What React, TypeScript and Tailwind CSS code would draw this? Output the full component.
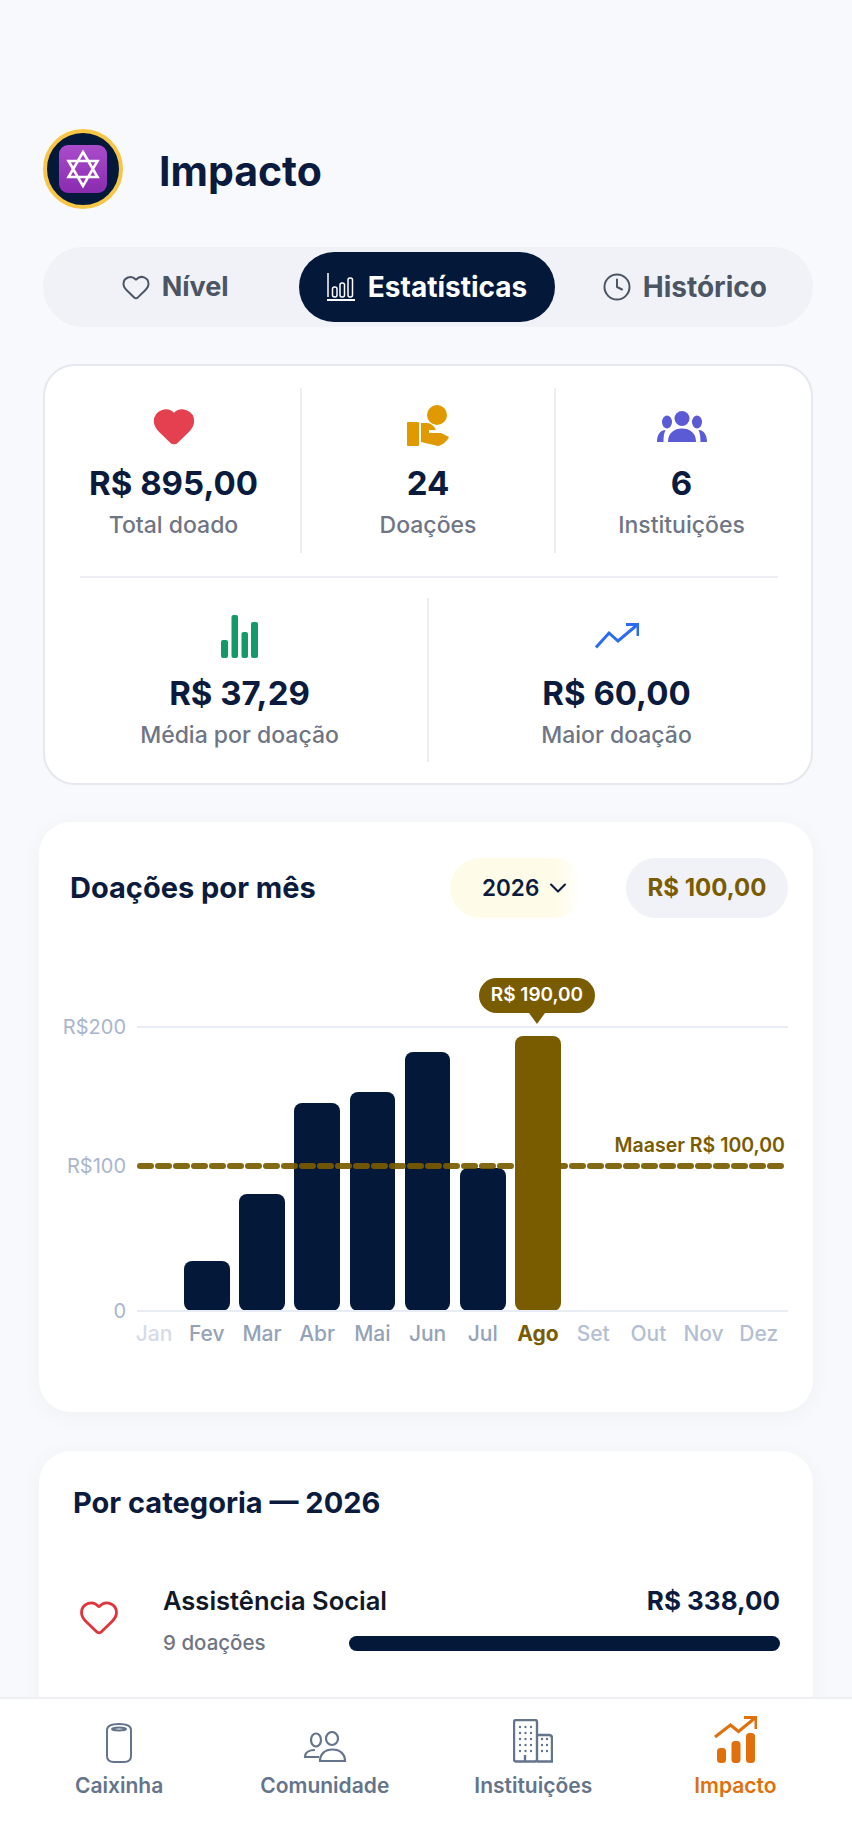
import { ChevronDown, Clock, Heart } from 'lucide-react';

const months = [
  { label: 'Jan', bar: 0, color: 'text-[#d5dbe7] pl-[5px]' },
  { label: 'Fev', bar: 50, color: 'text-[#94a3b8]' },
  { label: 'Mar', bar: 117, color: 'text-[#94a3b8]' },
  { label: 'Abr', bar: 208, color: 'text-[#94a3b8]' },
  { label: 'Mai', bar: 219, color: 'text-[#94a3b8]' },
  { label: 'Jun', bar: 259, color: 'text-[#94a3b8]' },
  { label: 'Jul', bar: 143, color: 'text-[#94a3b8]' },
  { label: 'Ago', bar: 275, color: 'text-[#7a5c00] font-bold' },
  { label: 'Set', bar: 0, color: 'text-[#b4bfd3]' },
  { label: 'Out', bar: 0, color: 'text-[#b4bfd3]' },
  { label: 'Nov', bar: 0, color: 'text-[#b4bfd3]' },
  { label: 'Dez', bar: 0, color: 'text-[#b4bfd3]' },
];

function StarAvatar() {
  return (
    <div className="flex h-[80px] w-[80px] shrink-0 items-center justify-center rounded-full border-[4px] border-[#f7c644] bg-[#04183a]">
      <svg width="48" height="48" viewBox="0 0 48 48">
        <defs>
          <linearGradient id="purple" x1="0" y1="0" x2="0" y2="1">
            <stop offset="0" stopColor="#a94ccc" />
            <stop offset="1" stopColor="#8a2bb0" />
          </linearGradient>
        </defs>
        <rect x="0" y="0" width="48" height="48" rx="9" fill="url(#purple)" />
        <path d="M24 7 L38.5 32 H9.5 Z M24 41 L9.5 16 H38.5 Z" fill="none" stroke="#fff" strokeWidth="2.6" strokeLinejoin="miter" />
      </svg>
    </div>
  );
}

function TabChartIcon() {
  return (
    <svg width="28" height="28" viewBox="0 0 28 28" fill="none" stroke="#fff" strokeWidth="1.5">
      <path d="M1 0 V24" />
      <path d="M0 27 H28" strokeWidth="2" />
      <rect x="5.5" y="14" width="4.5" height="10" rx="2" />
      <rect x="13" y="10" width="4.5" height="14" rx="2" />
      <rect x="21" y="5" width="4.5" height="19" rx="2" />
    </svg>
  );
}

function HandIcon() {
  return (
    <svg width="42" height="42" viewBox="0 0 42 42" fill="#e09a00">
      <circle cx="30" cy="10" r="10" />
      <rect x="0" y="17" width="12" height="24" rx="1" />
      <path d="M14 18 H20 C24 18 27 21 29 25 H22 V28 H34 L42 32 C40 36 36 40 31 41 L14 37 Z" />
    </svg>
  );
}

function GroupIcon() {
  return (
    <svg width="50" height="31" viewBox="0 0 50 31" fill="#5b5bd6">
      <ellipse cx="25" cy="7.5" rx="7.5" ry="7.5" />
      <ellipse cx="10" cy="11" rx="5" ry="6.5" />
      <ellipse cx="40" cy="11" rx="5" ry="6.5" />
      <path d="M11 31 C11 22 17 17.500 25 17.500 C33 17.500 39 22 39 31 Z" />
      <path d="M0 31 C0 24 3 19 8.500 19 C7 22 6.500 26 6.500 31 Z" />
      <path d="M50 31 C50 24 47 19 41.500 19 C43 22 43.500 26 43.500 31 Z" />
    </svg>
  );
}

function GreenBars() {
  return (
    <svg width="37" height="43" viewBox="0 0 37 43" fill="#129a68">
      <rect x="0" y="25" width="7" height="18" rx="2" />
      <rect x="10.500" y="0" width="6.500" height="43" rx="2" />
      <rect x="20.500" y="17" width="6.500" height="26" rx="2" />
      <rect x="30" y="7" width="7" height="36" rx="2" />
    </svg>
  );
}

function TrendIcon() {
  return (
    <svg width="44" height="26" viewBox="0 0 44 26" fill="none" stroke="#2b6cf0" strokeWidth="3">
      <path d="M1 24.500 L14 10 L23 18 L42 2" />
      <path d="M31 1.500 H43 V13" />
    </svg>
  );
}

function CaixinhaIcon() {
  return (
    <svg width="26" height="40" viewBox="0 0 26 40" fill="none" stroke="#64748b" strokeWidth="2">
      <path d="M1 7 C1 3 5 1 13 1 C21 1 25 3 25 7 V33 C25 37 22 39 18 39 H8 C4 39 1 37 1 33 Z" />
      <ellipse cx="13" cy="6" rx="7" ry="1.500" />
    </svg>
  );
}

function ComunidadeIcon() {
  return (
    <svg width="44" height="32" viewBox="0 0 44 32" fill="none" stroke="#64748b" strokeWidth="2.2">
      <ellipse cx="13" cy="9" rx="5" ry="6.500" />
      <ellipse cx="29" cy="7.500" rx="6" ry="6.500" />
      <path d="M17 30 C17 23 22 18.500 29.500 18.500 C37 18.500 42 23 42 30 Z" />
      <path d="M16 26 H2 C2 21.500 6 19 12 19" />
    </svg>
  );
}

function PredioIcon() {
  const rows = [8, 14, 20, 26, 32];
  return (
    <svg width="40" height="44" viewBox="0 0 40 44" fill="none" stroke="#64748b" strokeWidth="2.4">
      <rect x="1" y="1" width="23" height="41.500" rx="2" />
      <path d="M24 16 H36 C38 16 39 17 39 19 V42.500 H24" />
      <path d="M12 42 V36" />
      {rows.map((y) => (
        <g key={y} fill="#64748b" stroke="none">
          <circle cx="7" cy={y} r="1.200" />
          <circle cx="12.500" cy={y} r="1.200" />
          <circle cx="18" cy={y} r="1.200" />
          {y > 14 && <circle cx="29" cy={y} r="1.200" />}
          {y > 14 && <circle cx="34" cy={y} r="1.200" />}
        </g>
      ))}
    </svg>
  );
}

function ImpactoIcon() {
  return (
    <svg width="43" height="47" viewBox="0 0 43 47" fill="#e0700c">
      <rect x="3" y="32" width="9" height="15" rx="3.500" />
      <rect x="17.500" y="25" width="9" height="22" rx="3.500" />
      <rect x="32" y="17" width="9" height="30" rx="3.500" />
      <path d="M1 21 L16.500 9 L24.500 15.500 L41 2" fill="none" stroke="#e0700c" strokeWidth="3" />
      <path d="M30 1.500 H42 V13" fill="none" stroke="#e0700c" strokeWidth="3" />
    </svg>
  );
}

function Stat({ icon, value, label, className }: { icon: React.ReactNode; value: string; label: string; className?: string }) {
  return (
    <div className={`flex flex-col items-center pt-[7px] ${className ?? ''}`}>
      <div className="flex h-[62px] items-center justify-center">{icon}</div>
      <div className="mt-[6px] text-[33px] leading-[40px] font-bold text-[#0b1b3d]">{value}</div>
      <div className="mt-[7px] text-[23px] leading-[30px] font-medium text-[#6f7585]">{label}</div>
    </div>
  );
}

function NavItem({ icon, label, active, className }: { icon: React.ReactNode; label: string; active?: boolean; className?: string }) {
  return (
    <div className={`flex flex-col items-center ${className ?? ''}`}>
      <div className="flex h-[50px] items-end justify-center">{icon}</div>
      <span className={`mt-[9px] text-[21px] leading-[28px] font-semibold ${active ? 'text-[#e0700c]' : 'text-[#64748b]'}`}>
        {label}
      </span>
    </div>
  );
}

export default function App() {
  return (
    <div className="flex h-[1847px] w-[852px] flex-col overflow-hidden bg-[#f8f9fc] font-[family-name:Inter,sans-serif]">
      <main className="min-h-0 flex-1 overflow-hidden pt-[129px] pr-[39px] pl-[39px]">
        {/* Header */}
        <header className="ml-[4px] flex items-center gap-[36px]">
          <StarAvatar />
          <h1 className="pt-[3px] text-[41px] leading-[48px] font-bold text-[#0b1b3d]">Impacto</h1>
        </header>

        {/* Tabs */}
        <div className="mt-[38px] ml-[4px] grid h-[80px] grid-cols-3 rounded-[40px] bg-[#f0f2f8] p-[5px] text-[28px] font-bold text-[#4b5563]">
          <div className="flex items-center justify-center gap-[11px] text-[27px]">
            <Heart size={30} strokeWidth={1.6} />
            <span>Nível</span>
          </div>
          <div className="-ml-[2px] flex items-center justify-center gap-[13px] rounded-[35px] bg-[#04183a] text-white">
            <TabChartIcon />
            <span>Estatísticas</span>
          </div>
          <div className="flex items-center justify-center gap-[11px] pl-[6px]">
            <Clock size={30} strokeWidth={1.6} />
            <span>Histórico</span>
          </div>
        </div>

        {/* Stats */}
        <section className="mt-[37px] ml-[4px] h-[421px] rounded-[32px] border-2 border-[#e6e8ef] bg-white px-[4px] pt-[22px]">
          <div className="grid h-[165px] grid-cols-[253px_254px_1fr]">
            <Stat icon={<Heart size={44} fill="#e5404f" stroke="#e5404f" />} value="R$ 895,00" label="Total doado" className="border-r-2 border-[#eceef3] pr-[2px]" />
            <Stat icon={<HandIcon />} value="24" label="Doações" className="border-r-2 border-[#eceef3]" />
            <Stat icon={<GroupIcon />} value="6" label="Instituições" />
          </div>
          <div className="mt-[23px] mr-[29px] ml-[31px] h-[2px] bg-[#eceef3]" />
          <div className="mt-[20px] grid h-[164px] grid-cols-[380px_1fr]">
            <Stat icon={<GreenBars />} value="R$ 37,29" label="Média por doação" className="border-r-2 border-[#eceef3] pl-[3px]" />
            <Stat icon={<TrendIcon />} value="R$ 60,00" label="Maior doação" className="pr-[3px]" />
          </div>
        </section>

        {/* Chart */}
        <section className="mt-[37px] h-[590px] rounded-[32px] bg-white pt-[36px] shadow-[0_4px_24px_rgba(15,23,42,0.04)]">
          <div className="flex items-center pr-[25px] pl-[31px]">
            <h2 className="flex-1 text-[29px] leading-[36px] font-bold text-[#0b1b3d]">Doações por mês</h2>
            <div className="flex h-[60px] w-[133px] items-center gap-[5px] rounded-[30px] bg-linear-to-r from-[#fefce8] from-80% to-white pl-[32px] text-[22.500px] font-semibold text-[#0b1b3d]">
              2026
              <ChevronDown size={28} strokeWidth={1.8} />
            </div>
            <div className="ml-[43px] flex h-[60px] w-[162px] items-center justify-center rounded-[30px] bg-[#f1f2f8] text-[24px] font-bold text-[#7a5c00]">
              R$ 100,00
            </div>
          </div>

          <div className="relative mt-[109px] mr-[25px] ml-[98px] h-[284px]">
            <div className="absolute inset-x-0 top-[-1px] h-[2px] bg-[#e8edf5]" />
            <div className="absolute inset-x-0 bottom-[-1px] h-[2px] bg-[#e8edf5]" />
            <span className="absolute top-[-14px] right-full mr-[11px] text-[20px] leading-[28px] text-[#a9b6cd]">R$200</span>
            <span className="absolute top-[125px] right-full mr-[11px] text-[20px] leading-[28px] text-[#a9b6cd]">R$100</span>
            <span className="absolute top-[270px] right-full mr-[11px] text-[20px] leading-[28px] text-[#a9b6cd]">0</span>

            <div className="ml-[-13px] grid h-full w-[662.4px] grid-cols-12">
              {months.map((m) => (
                <div key={m.label} className="flex items-end justify-center">
                  {m.bar > 0 && (
                    <div
                      className={`w-[45.5px] rounded-[8px] ${m.label === 'Ago' ? 'bg-[#7a5c00]' : 'bg-[#04183a]'}`}
                      style={{ height: m.bar }}
                    />
                  )}
                </div>
              ))}
            </div>

            <svg className="absolute top-[136px] left-0" width="652" height="6" viewBox="0 0 652 6">
              <line x1="3" y1="3" x2="650" y2="3" stroke="#7a5c00" strokeOpacity="0.92" strokeWidth="6" strokeDasharray="11 7" strokeLinecap="round" />
            </svg>
            <span className="absolute top-[105px] right-[3px] text-[19.500px] leading-[26px] font-semibold text-[#7a5c00]">Maaser R$ 100,00</span>

            <div className="absolute top-[-49px] left-[342px] flex h-[35px] w-[116px] items-center justify-center rounded-[18px] bg-[#7a5c00] text-[19px] font-semibold text-white">
              R$ 190,00
              <div className="absolute top-full left-1/2 h-0 w-0 -translate-x-1/2 border-x-[8px] border-t-[11px] border-x-transparent border-t-[#7a5c00]" />
            </div>
          </div>

          <div className="mt-[9px] ml-[85px] grid w-[662.4px] grid-cols-12 text-center text-[21px] leading-[28px] font-medium">
            {months.map((m) => (
              <span key={m.label} className={m.color}>{m.label}</span>
            ))}
          </div>
        </section>

        {/* Categories */}
        <section className="mt-[39px] h-[400px] rounded-[32px] bg-white pt-[34px] pr-[33px] pl-[39px] shadow-[0_4px_24px_rgba(15,23,42,0.04)]">
          <h2 className="-ml-[5px] text-[29px] leading-[36px] font-bold text-[#0b1b3d]">Por categoria — 2026</h2>
          <div className="mt-[63px] flex items-center gap-[43px]">
            <Heart size={42} strokeWidth={1.6} className="mb-[8px] shrink-0 text-[#e0343c]" />
            <div className="flex-1">
              <div className="flex items-center justify-between">
                <span className="text-[25.500px] leading-[34px] font-semibold text-[#111827]">Assistência Social</span>
                <span className="text-[26px] leading-[34px] font-bold text-[#0b1b3d]">R$ 338,00</span>
              </div>
              <div className="mt-[11px] flex items-center justify-between">
                <span className="text-[20.500px] leading-[28px] font-medium text-[#6f7585]">9 doações</span>
                <div className="h-[15px] w-[431px] rounded-full bg-[#04183a]" />
              </div>
            </div>
          </div>
        </section>
      </main>

      {/* Bottom nav */}
      <nav className="flex h-[150px] shrink-0 border-t-2 border-[#eef0f4] bg-white pt-[14px] pl-[75px]">
        <NavItem icon={<CaixinhaIcon />} label="Caixinha" />
        <NavItem icon={<ComunidadeIcon />} label="Comunidade" className="ml-[97px]" />
        <NavItem icon={<PredioIcon />} label="Instituições" className="ml-[85px]" />
        <NavItem icon={<ImpactoIcon />} label="Impacto" active className="ml-[102px]" />
      </nav>
    </div>
  );
}
